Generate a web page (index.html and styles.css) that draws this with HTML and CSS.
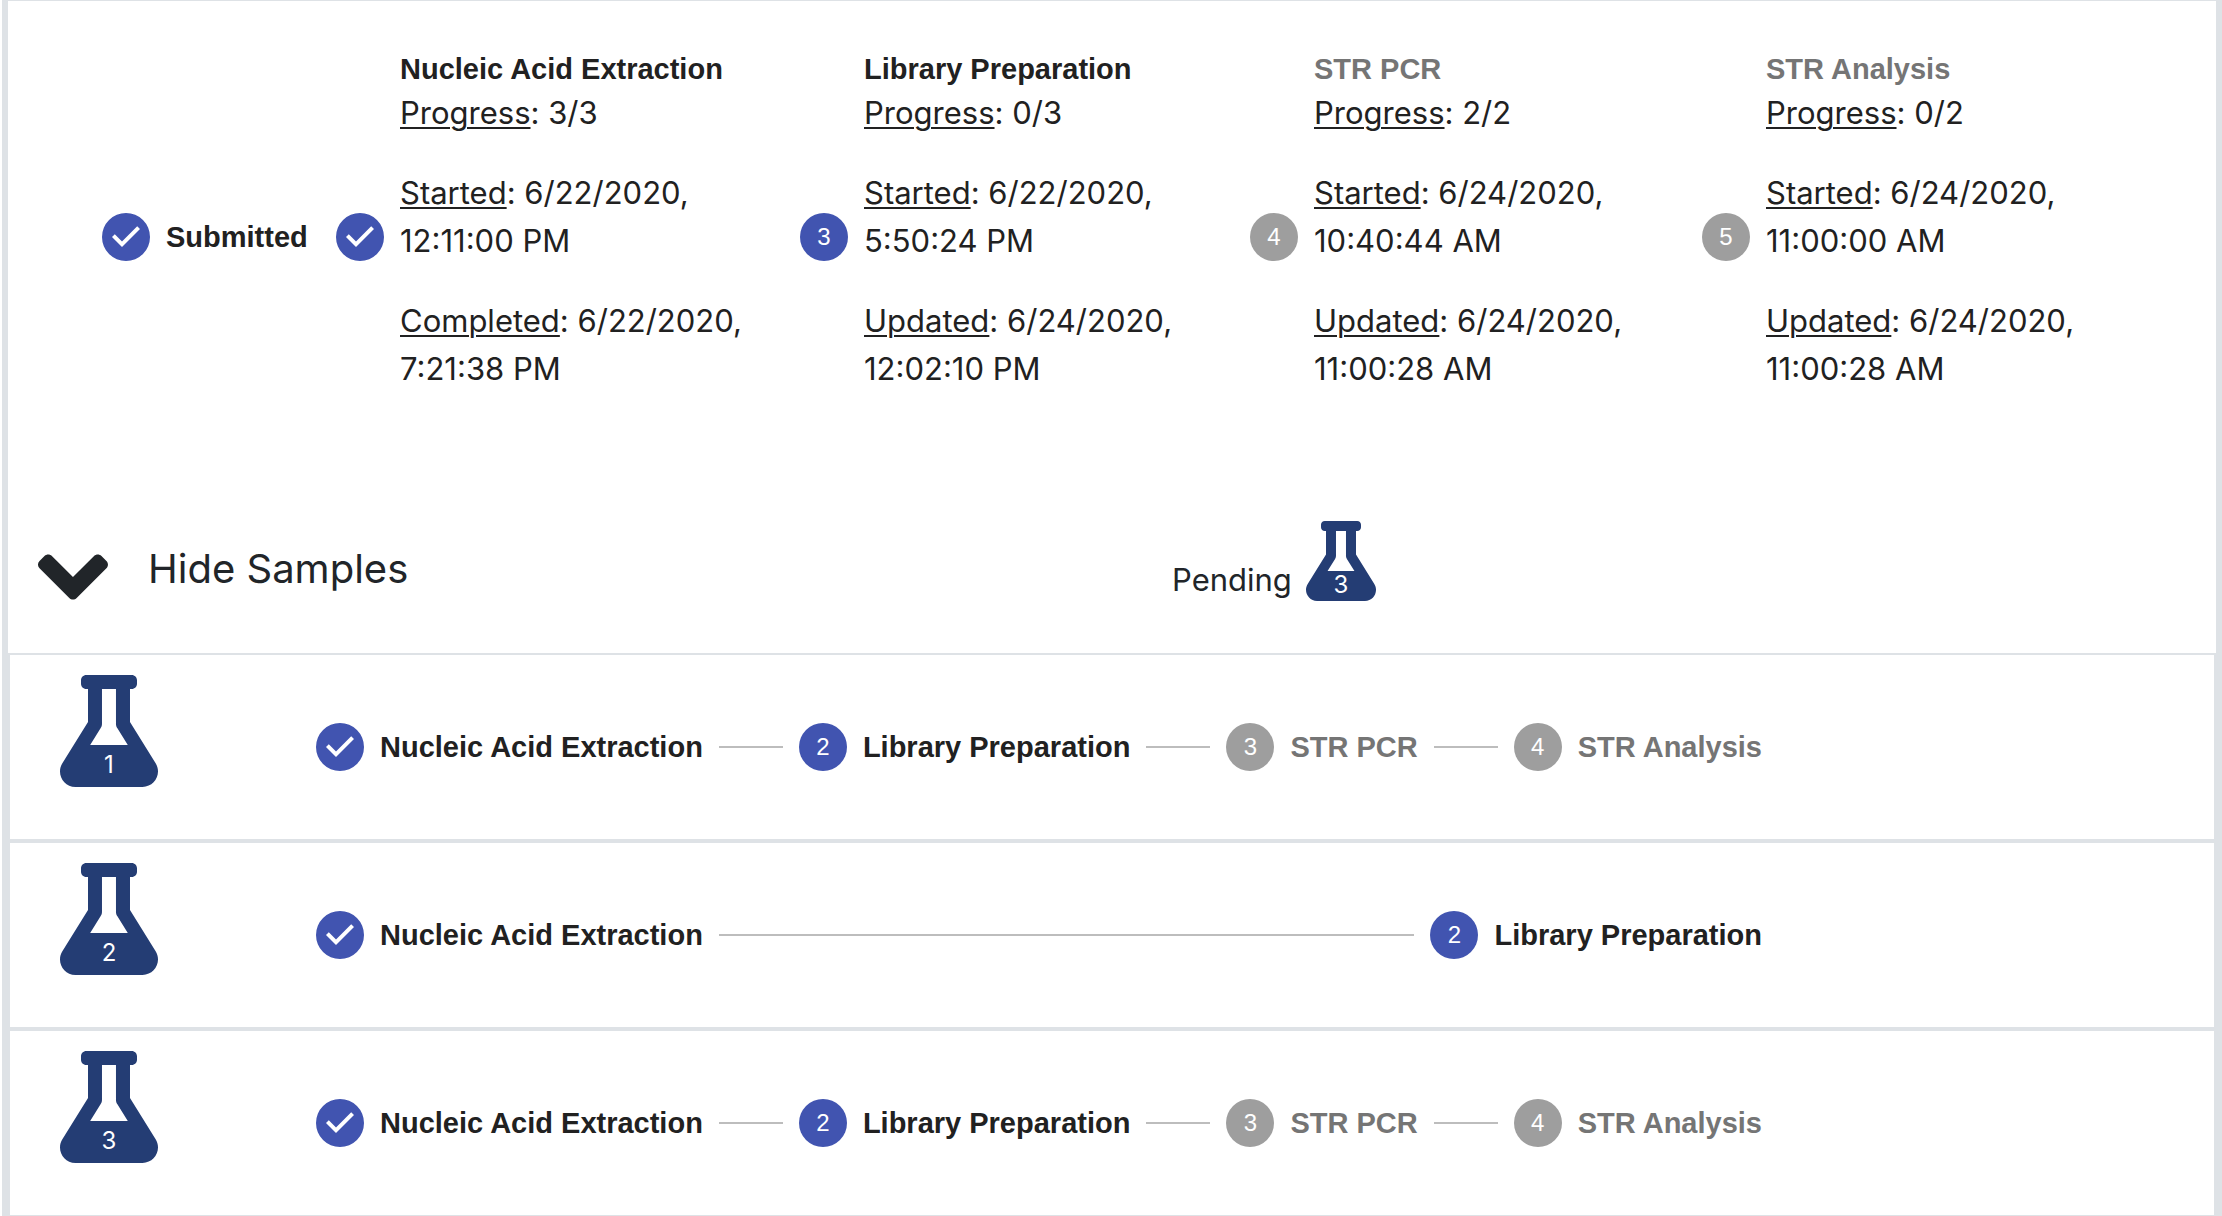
FILE: index.html
```
<!DOCTYPE html>
<html lang="en">
<head>
<meta charset="utf-8">
<title>Order progress</title>
<link rel="stylesheet" href="styles.css">
</head>
<body>
<svg class="sprite" aria-hidden="true">
  <symbol id="check" viewBox="0 0 24 24"><path d="M12 0a12 12 0 1 0 0 24 12 12 0 0 0 0-24zm-2 17l-5-5 1.4-1.4 3.6 3.6 7.6-7.6L19 8l-9 9z"/></symbol>
  <symbol id="flask" viewBox="0 0 448 512"><path d="M437.2 403.5L320 215V64h8c13.3 0 24-10.7 24-24V24c0-13.3-10.7-24-24-24H120c-13.3 0-24 10.7-24 24v16c0 13.3 10.7 24 24 24h8v151L10.8 403.5C-18.5 450.6 15.3 512 70.9 512h306.2c55.7 0 89.4-61.5 60.1-108.5zM137.9 320l48.2-77.6c3.7-5.2 5.8-11.6 5.8-18.4V64h64v160c0 6.9 2.2 13.2 5.8 18.4l48.2 77.6h-172z"/></symbol>
  <symbol id="angle-down" viewBox="0 0 320 512"><path d="M143 352.3L7 216.3c-9.4-9.4-9.4-24.6 0-33.9l22.6-22.6c9.4-9.4 24.6-9.4 33.9 0l96.4 96.4 96.4-96.4c9.4-9.4 24.6-9.4 33.9 0l22.6 22.6c9.4 9.4 9.4 24.6 0 33.9l-136 136c-9.2 9.4-24.4 9.4-33.8 0z"/></symbol>
</svg>
<main class="order">
  <ol class="summary">
    <li class="step">
      <svg class="step-check"><use href="#check"/></svg>
      <div class="step-body"><h2 class="step-title">Submitted</h2></div>
    </li>
    <li class="step">
      <svg class="step-check"><use href="#check"/></svg>
      <div class="step-body">
        <h2 class="step-title">Nucleic Acid Extraction</h2>
        <p><u>Progress</u>: 3/3</p>
        <p><u>Started</u>: 6/22/2020,<br>12:11:00 PM</p>
        <p><u>Completed</u>: 6/22/2020,<br>7:21:38 PM</p>
      </div>
    </li>
    <li class="step">
      <span class="step-number">3</span>
      <div class="step-body">
        <h2 class="step-title">Library Preparation</h2>
        <p><u>Progress</u>: 0/3</p>
        <p><u>Started</u>: 6/22/2020,<br>5:50:24 PM</p>
        <p><u>Updated</u>: 6/24/2020,<br>12:02:10 PM</p>
      </div>
    </li>
    <li class="step step-inactive">
      <span class="step-number">4</span>
      <div class="step-body">
        <h2 class="step-title">STR PCR</h2>
        <p><u>Progress</u>: 2/2</p>
        <p><u>Started</u>: 6/24/2020,<br>10:40:44 AM</p>
        <p><u>Updated</u>: 6/24/2020,<br>11:00:28 AM</p>
      </div>
    </li>
    <li class="step step-inactive">
      <span class="step-number">5</span>
      <div class="step-body">
        <h2 class="step-title">STR Analysis</h2>
        <p><u>Progress</u>: 0/2</p>
        <p><u>Started</u>: 6/24/2020,<br>11:00:00 AM</p>
        <p><u>Updated</u>: 6/24/2020,<br>11:00:28 AM</p>
      </div>
    </li>
  </ol>

  <div class="samples-bar">
    <button class="toggle" type="button" aria-expanded="true">
      <svg class="toggle-icon"><use href="#angle-down"/></svg>
      <span class="toggle-label">Hide Samples</span>
    </button>
    <div class="pending">
      <span class="pending-label">Pending</span>
      <span class="flask flask-small"><svg><use href="#flask"/></svg><span class="flask-count">3</span></span>
    </div>
  </div>

  <ul class="samples">
    <li class="sample">
      <span class="flask"><svg><use href="#flask"/></svg><span class="flask-count">1</span></span>
      <ol class="track">
        <li class="step"><svg class="step-check"><use href="#check"/></svg><span class="step-title">Nucleic Acid Extraction</span></li>
        <li class="line" aria-hidden="true"></li>
        <li class="step"><span class="step-number">2</span><span class="step-title">Library Preparation</span></li>
        <li class="line" aria-hidden="true"></li>
        <li class="step step-inactive"><span class="step-number">3</span><span class="step-title">STR PCR</span></li>
        <li class="line" aria-hidden="true"></li>
        <li class="step step-inactive"><span class="step-number">4</span><span class="step-title">STR Analysis</span></li>
      </ol>
    </li>
    <li class="sample">
      <span class="flask"><svg><use href="#flask"/></svg><span class="flask-count">2</span></span>
      <ol class="track">
        <li class="step"><svg class="step-check"><use href="#check"/></svg><span class="step-title">Nucleic Acid Extraction</span></li>
        <li class="line" aria-hidden="true"></li>
        <li class="step"><span class="step-number">2</span><span class="step-title">Library Preparation</span></li>
      </ol>
    </li>
    <li class="sample">
      <span class="flask"><svg><use href="#flask"/></svg><span class="flask-count">3</span></span>
      <ol class="track">
        <li class="step"><svg class="step-check"><use href="#check"/></svg><span class="step-title">Nucleic Acid Extraction</span></li>
        <li class="line" aria-hidden="true"></li>
        <li class="step"><span class="step-number">2</span><span class="step-title">Library Preparation</span></li>
        <li class="line" aria-hidden="true"></li>
        <li class="step step-inactive"><span class="step-number">3</span><span class="step-title">STR PCR</span></li>
        <li class="line" aria-hidden="true"></li>
        <li class="step step-inactive"><span class="step-number">4</span><span class="step-title">STR Analysis</span></li>
      </ol>
    </li>
  </ul>
</main>
</body>
</html>
```
FILE: styles.css
```
* {
  box-sizing: border-box;
}

body {
  margin: 0;
  background: #fff;
  color: #212529;
  font-family: Inter, "Liberation Sans", sans-serif;
  font-size: 31px;
  line-height: 48px;
}

ol,
ul {
  margin: 0;
  padding: 0;
  list-style: none;
}

.sprite {
  display: none;
}

.order {
  margin-left: 2px;
  border: 6px solid #dee2e6;
  border-top-width: 1px;
  border-bottom: 0;
}

/* Order-level steps */
.summary {
  display: grid;
  grid-template-columns: minmax(0, 202fr) 432fr 418fr 420fr 420fr;
  gap: 32px;
  align-items: center;
  padding: 48px 94px;
}

.step {
  display: flex;
  align-items: center;
  gap: 16px;
  color: #212121;
}

.step-check,
.step-number {
  flex: none;
  width: 48px;
  height: 48px;
}

.step-check {
  fill: #4154b0;
}

.step-number {
  border-radius: 50%;
  background: #4154b0;
  color: #fff;
  font-family: "Liberation Sans", Arial, sans-serif;
  font-size: 24px;
  text-align: center;
}

.step-title {
  margin: 0;
  font-family: "Liberation Sans", Arial, sans-serif;
  font-size: 29px;
  font-weight: 700;
  line-height: 40px;
  white-space: nowrap;
}

.step-inactive .step-number {
  background: #9e9e9e;
}

.step-inactive .step-title {
  color: #757575;
}

.step-body p {
  margin: 0 0 32px;
}

.step-body u {
  text-decoration-thickness: 2px;
  text-underline-offset: 3px;
}

/* Samples header */
.samples-bar {
  display: grid;
  grid-template-columns: 1fr 1fr;
  align-items: start;
  padding: 48px 0 20px;
}

.toggle {
  display: flex;
  gap: 40px;
  padding: 0 0 0 30px;
  border: 0;
  background: none;
  color: inherit;
  font: inherit;
  cursor: pointer;
}

.toggle-icon {
  width: 70px;
  height: 112px;
  fill: #212529;
}

.toggle-label {
  font-size: 40px;
  line-height: 96px;
}

.pending {
  display: flex;
  align-items: flex-end;
  gap: 14px;
  padding-left: 60px;
}

.pending-label {
  line-height: 42px;
}

.flask {
  display: grid;
  width: 98px;
  height: 112px;
  color: #fff;
  font-size: 24px;
  line-height: 44px;
  text-align: center;
}

.flask > * {
  grid-area: 1 / 1;
}

.flask svg {
  width: 100%;
  height: 100%;
  fill: #243d74;
}

.flask-count {
  align-self: end;
  z-index: 1;
}

.flask-small {
  width: 70px;
  height: 80px;
  line-height: 32px;
}

/* Sample rows */
.sample {
  display: grid;
  grid-template-columns: 256fr 1446fr 402fr;
  padding: 20px 50px 52px;
  border: 2px solid #dee2e6;
}

.sample:last-child {
  border-bottom-width: 1px;
}

.track {
  display: flex;
  align-items: center;
  gap: 16px;
  padding-top: 32px;
}

.line {
  flex: 1;
  height: 2px;
  background: #bdbdbd;
}
```
